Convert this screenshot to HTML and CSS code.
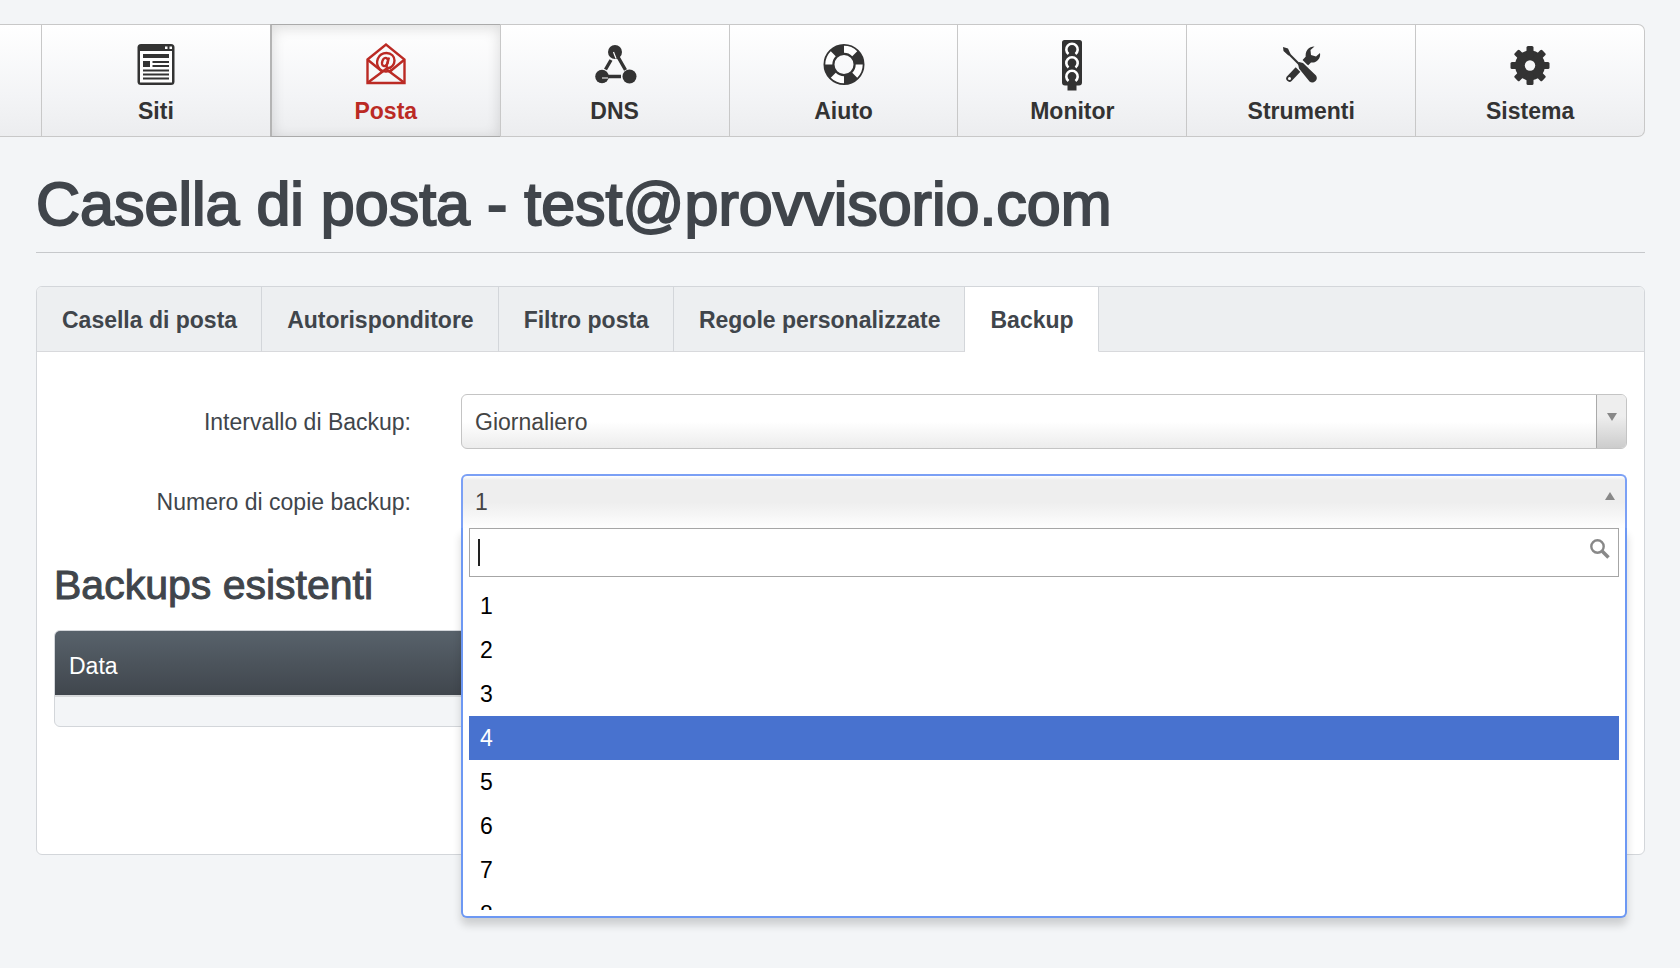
FILE: index.html
```html
<!DOCTYPE html>
<html lang="it">
<head>
<meta charset="utf-8">
<meta name="viewport" content="width=device-width, initial-scale=1">
<title>Casella di posta - Backup</title>
<link rel="stylesheet" href="styles.css">
</head>
<body>
<nav class="main-nav" aria-label="Navigazione principale">
  <div class="nav-edge"></div>
  <a class="nav-item" href="#siti">
    <svg class="nav-icon" viewBox="0 0 52 52" aria-hidden="true">
      <rect x="7.500" y="5" width="37" height="41" rx="3.500" fill="#333"/>
      <rect x="10" y="12" width="32" height="31.500" fill="#fff"/>
      <path d="M35 7.500h2.500V10H35zM39.500 7.500H42V10h-2.500z" fill="#fff"/>
      <path d="M13 15h26v4H13zM13 22h7v6h-7zM22.500 22H39v2H22.500zM22.500 26H39v2H22.500zM13 30.500h26v2H13zM13 34.500h26v2H13zM13 38.500h26v2H13z" fill="#333"/>
    </svg>
    <span>Siti</span>
  </a>
  <a class="nav-item nav-item-active" href="#posta" aria-current="page">
    <svg class="nav-icon" viewBox="0 0 52 52" aria-hidden="true" fill="none" stroke="#bb2a24" stroke-width="2.400">
      <path d="M7.500 20.500L26 5.500l18.500 15V44h-37z"/>
      <path d="M8 21l13.500 11M44 21L30.500 32M8 43.500L26 30l18 13.500"/>
      <path d="M20 30.500C14 24 18 14 26.500 14c5 0 8 3.500 8 7.500s-3 7.500-6 7.500c-2 0-2-1.500-1.700-3L29 18.500"/>
      <ellipse cx="25" cy="23" rx="2.800" ry="4.200" transform="rotate(20 25 23)"/>
      <path d="M20 30.500c3 2.500 8 2.500 12 .5"/>
    </svg>
    <span>Posta</span>
  </a>
  <a class="nav-item" href="#dns">
    <svg class="nav-icon" viewBox="0 0 52 52" aria-hidden="true">
      <circle cx="26" cy="13" r="7" fill="#333"/><circle cx="13" cy="37.500" r="6.800" fill="#333"/><circle cx="40.500" cy="37.500" r="7" fill="#333"/>
      <path d="M26.500 13.500l10 17.500M22 21l-5.500 9.500M13 37.500h19" fill="none" stroke="#333" stroke-width="3.400"/>
      <path d="M24.500 13l2.500 6.500M13 39h6" fill="none" stroke="#fff" stroke-width="1.200"/>
    </svg>
    <span>DNS</span>
  </a>
  <a class="nav-item" href="#aiuto">
    <svg class="nav-icon" viewBox="0 0 52 52" aria-hidden="true" fill="none">
      <circle cx="26" cy="25.500" r="15" stroke="#333" stroke-width="11"/>
      <circle cx="26" cy="25.500" r="15.200" stroke="#fff" stroke-width="7" pathLength="12" stroke-dasharray="1.500 1.500"/>
    </svg>
    <span>Aiuto</span>
  </a>
  <a class="nav-item" href="#monitor">
    <svg class="nav-icon" viewBox="0 0 52 52" aria-hidden="true">
      <path d="M18.500 1h15a2.500 2.500 0 0 1 2.500 2.500v40a3 3 0 0 1-3 3h-2.500v5h-9v-5H19a3 3 0 0 1-3-3v-40A2.500 2.500 0 0 1 18.500 1z" fill="#333"/>
      <path d="M22.500 15a5.700 5.700 0 1 1 7 0M22.500 28.500a5.700 5.700 0 1 1 7 0M22.500 42a5.700 5.700 0 1 1 7 0" fill="none" stroke="#fff" stroke-width="2.600"/>
    </svg>
    <span>Monitor</span>
  </a>
  <a class="nav-item" href="#strumenti">
    <svg class="nav-icon" viewBox="0 0 52 52" aria-hidden="true">
      <path d="M14.500 39.500L33 20" stroke="#333" stroke-width="6.500" stroke-linecap="round"/>
      <path d="M39.500 7.500a8.500 8.500 0 0 0-8.500 11l-3 3 5 5 3-3a8 8 0 0 0 9-9.500l-4 3.500-5-1.500-.5-5z" fill="#333"/>
      <path d="M23.500 24l5 5 4.500 4.500" stroke="#f6f7f8" stroke-width="10"/>
      <path d="M10 11l17 17" stroke="#333" stroke-width="2.200"/>
      <path d="M8 8l5 1.500 2.500 5.500-2 1.500-5-4.500zM24 23l4 1 13 12.500a4.500 4.500 0 0 1-6.500 6L24 29.500l-1-5z" fill="#333"/>
      <circle cx="14.500" cy="39.500" r="1.500" fill="#fff"/>
    </svg>
    <span>Strumenti</span>
  </a>
  <a class="nav-item" href="#sistema">
    <svg class="nav-icon" viewBox="0 0 52 52" aria-hidden="true">
      <g fill="#333"><circle cx="26" cy="26.500" r="15"/>
      <g id="gear-teeth"><rect x="22.500" y="7" width="7" height="39" rx="1.500"/><rect x="6.500" y="23" width="39" height="7" rx="1.500"/></g>
      <use href="#gear-teeth" transform="rotate(45 26 26.500)"/></g>
      <circle cx="26" cy="26.500" r="5.200" fill="#f6f7f8"/>
    </svg>
    <span>Sistema</span>
  </a>
</nav>
<main class="page">
  <h1 class="page-title">Casella di posta - test@provvisorio.com</h1>
  <section class="panel">
    <nav class="tabs" aria-label="Sezioni">
      <a class="tab" href="#casella">Casella di posta</a>
      <a class="tab" href="#autorisponditore">Autorisponditore</a>
      <a class="tab" href="#filtro">Filtro posta</a>
      <a class="tab" href="#regole">Regole personalizzate</a>
      <a class="tab tab-active" href="#backup" aria-current="page">Backup</a>
      <div class="tab-fill"></div>
    </nav>
    <div class="panel-body">
      <form class="form">
        <div class="field">
          <label class="field-label" for="interval">Intervallo di Backup:</label>
          <div class="select-wrap">
            <select class="select" id="interval"><option>Giornaliero</option></select>
            <span class="select-arrow"><svg class="triangle" viewBox="0 0 10 8" aria-hidden="true"><path d="M0 0h10L5 8z" fill="#888"/></svg></span>
          </div>
        </div>
        <div class="field">
          <label class="field-label" for="copies">Numero di copie backup:</label>
          <div class="combo">
            <button class="combo-button" id="copies" type="button" aria-haspopup="listbox" aria-expanded="true"><span>1</span><svg class="triangle" viewBox="0 0 10 8" aria-hidden="true"><path d="M0 8h10L5 0z" fill="#888"/></svg></button>
            <div class="combo-menu">
              <div class="search">
                <input class="search-input" type="text" aria-label="Cerca">
                <span class="caret"></span>
                <svg class="search-icon" viewBox="0 0 20 20" aria-hidden="true" fill="none" stroke="#888"><circle cx="7.500" cy="7.500" r="6.200" stroke-width="2.400"/><path d="M12 12l6.500 6.500" stroke-width="3.600"/></svg>
              </div>
              <ul class="options" role="listbox" aria-label="Numero di copie backup">
                <li class="option" role="option">1</li>
                <li class="option" role="option">2</li>
                <li class="option" role="option">3</li>
                <li class="option option-active" role="option" aria-selected="true">4</li>
                <li class="option" role="option">5</li>
                <li class="option" role="option">6</li>
                <li class="option" role="option">7</li>
                <li class="option" role="option">8</li>
              </ul>
            </div>
          </div>
        </div>
      </form>
      <h2 class="section-title">Backups esistenti</h2>
      <div class="table-frame">
        <table class="table">
          <thead><tr><th scope="col">Data</th></tr></thead>
          <tbody><tr><td></td></tr></tbody>
        </table>
      </div>
    </div>
  </section>
</main>
</body>
</html>
```
FILE: styles.css
```css
* {
  box-sizing: border-box;
}

body {
  min-height: 100vh;
  margin: 0;
  padding-top: 24px;
  background: #f3f5f7;
  color: #40454b;
  font: 23px/28px "Liberation Sans", Arial, sans-serif;
}

.main-nav {
  display: flex;
  margin-right: 35px;
  border: 1px solid #c8c8c8;
  border-left: 0;
  border-radius: 0 7px 7px 0;
  background: linear-gradient(#fff, #f3f4f6 65%, #ecedef);
}

.nav-edge {
  flex: 0 0 41px;
}

.nav-item {
  flex: 1 1 0;
  display: flex;
  flex-direction: column;
  align-items: center;
  gap: 6px;
  padding: 14px 0 11px;
  border-left: 1px solid #c8c8c8;
  color: #333;
  font-weight: bold;
  text-decoration: none;
}

.nav-item-active {
  margin: -1px 0;
  border: 1px solid #aaa;
  border-left: 2px solid #b4b4b4;
  border-right: 0;
  box-shadow: inset 0 3px 14px rgba(0, 0, 0, 0.14);
  color: #bb2a24;
}

.nav-icon {
  display: block;
  width: 52px;
  height: 52px;
}

.page {
  padding: 35px 35px 0 36px;
}

.page-title {
  margin: 0 0 33px;
  padding-bottom: 16px;
  border-bottom: 1px solid #c6c8cb;
  font-size: 61px;
  line-height: 64px;
  font-weight: normal;
  -webkit-text-stroke: 2px #40454b;
}

.panel {
  border: 1px solid #d3d6da;
  border-radius: 6px;
  background: #fff;
}

.tabs {
  display: flex;
  border-radius: 5px 5px 0 0;
  background: #edeff1;
}

.tab,
.tab-fill {
  border-bottom: 1px solid #d8d9dc;
}

.tab {
  padding: 19px 24px 17px 25px;
  border-right: 1px solid #d3d6da;
  color: #40454b;
  font-weight: bold;
  text-decoration: none;
}

.tab-active {
  border-bottom-color: #fff;
  background: #fff;
}

.tab-fill {
  flex: 1;
}

.panel-body {
  padding: 42px 17px 127px;
}

.form {
  display: flex;
  flex-direction: column;
  gap: 25px;
}

.field {
  display: grid;
  grid-template-columns: 357px 1fr;
  column-gap: 50px;
  align-items: center;
}

.field-label {
  text-align: right;
}

.select-wrap,
.combo {
  position: relative;
}

.select {
  display: block;
  width: 100%;
  height: 55px;
  padding: 0 40px 0 13px;
  appearance: none;
  border: 1px solid #c4c4c4;
  border-radius: 6px;
  background: linear-gradient(#fff 50%, #ececec);
  color: #444;
  font: inherit;
}

.select-arrow {
  position: absolute;
  top: 1px;
  right: 1px;
  bottom: 1px;
  width: 30px;
  padding: 18px 0 0 10px;
  border-left: 1px solid #aaa;
  border-radius: 0 5px 5px 0;
  background: linear-gradient(#eee 40%, #ccc);
  pointer-events: none;
}

.triangle {
  display: block;
  width: 10px;
  height: 8px;
}

.combo-button {
  display: flex;
  justify-content: space-between;
  width: 100%;
  height: 55px;
  padding: 12px 10px 12px 12px;
  border: 2px solid #7ba0f5;
  border-bottom: 0;
  border-radius: 6px 6px 0 0;
  background: linear-gradient(#fff, #eee 4px, #eee 50%, #fff);
  color: #444;
  font: inherit;
}

.combo-button .triangle {
  margin-top: 4px;
}

.combo-menu {
  position: absolute;
  z-index: 1;
  top: 54px;
  left: 0;
  right: 0;
  padding: 0 6px 6px;
  border: 2px solid #6d98f3;
  border-top: 0;
  border-radius: 0 0 6px 6px;
  background: #fff;
  box-shadow: 0 7px 9px rgba(0, 0, 0, 0.16);
}

.search {
  position: relative;
}

.search-input {
  display: block;
  width: 100%;
  height: 49px;
  padding: 0 40px 0 9px;
  border: 1px solid #a6a6a6;
  background: #fff;
  font: inherit;
  outline: 0;
}

.caret {
  position: absolute;
  top: 11px;
  left: 9px;
  width: 2px;
  height: 27px;
  background: #222;
}

.search-icon {
  position: absolute;
  top: 11px;
  right: 9px;
  width: 20px;
  height: 20px;
}

.options {
  height: 333px;
  margin: 0;
  padding: 7px 0 0;
  overflow: hidden;
  list-style: none;
  color: #000;
}

.option {
  padding: 8px 11px;
}

.option-active {
  background: #4872cf;
  color: #fff;
}

.section-title {
  margin: 32px 0 21px;
  font-size: 41px;
  line-height: 48px;
  font-weight: normal;
  -webkit-text-stroke: 1px #40454b;
}

.table-frame {
  overflow: hidden;
  border: 1px solid #d3d6da;
  border-radius: 6px;
  background: #f3f5f7;
}

.table {
  width: 100%;
  border-collapse: collapse;
}

.table th {
  padding: 21px 14px 15px;
  border-bottom: 2px solid #d6d8da;
  background: linear-gradient(#58626b, #40464d);
  color: #fff;
  font-weight: normal;
  text-align: left;
}

.table td {
  height: 30px;
  padding: 0;
}
```
